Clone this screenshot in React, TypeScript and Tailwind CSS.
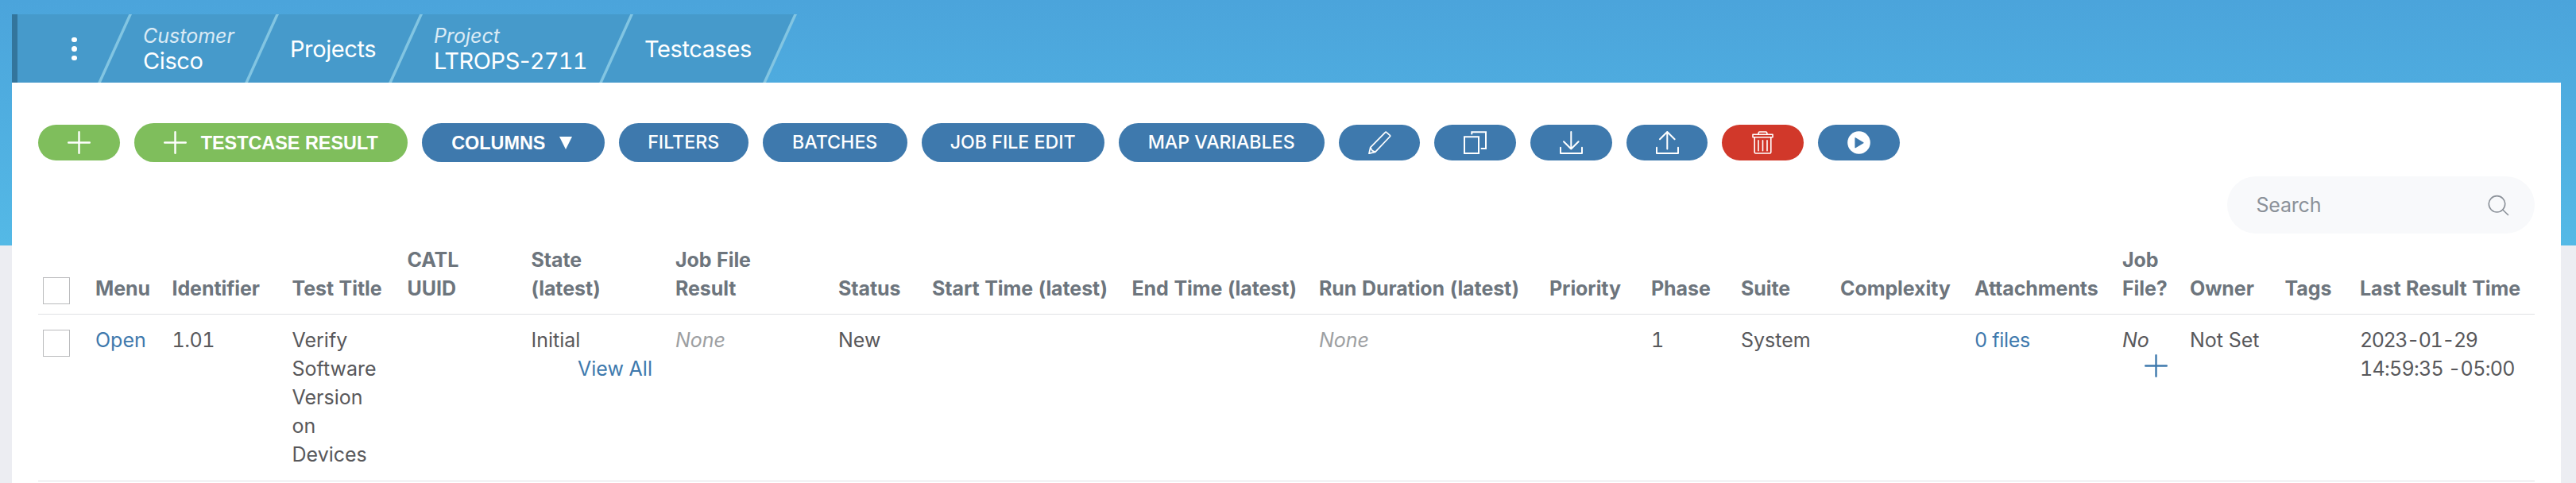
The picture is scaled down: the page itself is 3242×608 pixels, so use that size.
import {ReactNode} from "react";
import clsx from "clsx";

interface IColumn {
    title: ReactNode;
    width: string;
    value?: ReactNode;
}

interface ICrumb {
    label?: string;
    name: ReactNode;
    width: string;
}

interface IIcon {
    width?: number;
    children: ReactNode;
}

const Icon = ({width = 29, children}: IIcon) => (
    <svg width={width} height={29} viewBox={`0 0 ${width} 29`} fill="none" stroke="currentColor" strokeWidth={2}
         strokeLinecap="round" strokeLinejoin="round" className="shrink-0">
        {children}
    </svg>
);

const PlusIcon = () => (
    <Icon><path strokeWidth={2.4} d="M14.5 1.2v26.6M1.2 14.5h26.6"/></Icon>
);

// every crumb ends with a slanted divider, the last one cuts the bar off
const Slash = ({last = false}: { last?: boolean }) => (
    <svg width={43} height={86} viewBox="0 0 43 86" className="shrink-0">
        <path d={last ? "M0 0H41L2 86H0z" : "M0 0H43V86H0z"} fill="#469acb"/>
        <path d="M39.2 0H43L4 86H0.2z" fill="#82c5e2"/>
    </svg>
);

const crumbs: ICrumb[] = [
    {label: "Customer", name: "Cisco", width: "w-[142px]"},
    {name: "Projects", width: "w-[138px]"},
    {label: "Project", name: <>LTROPS-<span className="tabular-nums tracking-[-0.8px]">2711</span></>, width: "w-[222px]"},
    {name: "Testcases", width: "w-[163px]"},
];

const Breadcrumbs = () => (
    <nav className="flex h-[86px] text-white">
        <div className="w-[7px] bg-[#33759c]"/>
        <div className="flex w-[101px] flex-col items-center justify-center gap-[5px] bg-[#469acb] pl-[42px] pt-px">
            <span className="size-[6.5px] rounded-full bg-white"/>
            <span className="size-[6.5px] rounded-full bg-white"/>
            <span className="size-[6.5px] rounded-full bg-white"/>
        </div>
        <Slash/>
        {crumbs.map((crumb, index) => (
            <div key={index} className="flex">
                <div className={clsx("flex flex-col justify-center whitespace-nowrap bg-[#469acb] pl-[14px] pt-[2px]", crumb.width)}>
                    {crumb.label && <span className="text-[25px] italic leading-[30px] text-white/80">{crumb.label}</span>}
                    <span className="text-[29px] leading-[34px] tracking-[-0.4px]">{crumb.name}</span>
                </div>
                <Slash last={index === crumbs.length - 1}/>
            </div>
        ))}
    </nav>
);

const iconButton = "flex h-[45px] w-[102.7px] shrink-0 items-center justify-center rounded-full";
const textButton = "flex h-[49px] shrink-0 items-center rounded-full";
const boldLabel = "font-['Liberation_Sans',sans-serif] text-[23.4px] font-bold leading-6";

const textButtons = [
    {label: "FILTERS", width: "w-[163px]"},
    {label: "BATCHES", width: "w-[182px]"},
    {label: "JOB FILE EDIT", width: "w-[230px]"},
    {label: "MAP VARIABLES", width: "w-[259px]"},
];

const Toolbar = () => (
    <div className="flex h-[49px] items-center gap-[18px] whitespace-nowrap text-white">
        <button className={clsx(iconButton, "bg-[#7fbe5c]")}><PlusIcon/></button>
        <button className={clsx(textButton, "w-[344px] gap-[18px] bg-[#7fbe5c] pl-[37px]")}>
            <PlusIcon/>
            <span className={boldLabel}>TESTCASE RESULT</span>
        </button>
        <button className={clsx(textButton, "w-[230px] gap-[18px] bg-[#3e79ad] pl-[37.5px]")}>
            <span className={boldLabel}>COLUMNS</span>
            <svg width={16} height={16} viewBox="0 0 16 16" className="fill-white"><path d="M0 0h16L8 16z"/></svg>
        </button>
        {textButtons.map((button) => (
            <button key={button.label}
                    className={clsx(textButton, "justify-center bg-[#3e79ad] pb-[2px] text-[23.2px] font-medium leading-6", button.width)}>
                {button.label}
            </button>
        ))}
        <button className={clsx(iconButton, "bg-[#3e79ad]")}>
            <Icon><path strokeWidth={1.7} d="M1 28.2L2.7 20.6 21.4 1.6Q22.2 .8 23 1.6L27.3 5.4Q28 6.2 27.2 7L8.8 26.3zM2.7 20.6L5 24.6 8.8 26.3"/></Icon>
        </button>
        <button className={clsx(iconButton, "bg-[#3e79ad]")}>
            <Icon><path strokeLinejoin="miter" d="M1 7.3h18v20.6H1zM10.3 3.6V1.2H28V22h-5.5"/></Icon>
        </button>
        <button className={clsx(iconButton, "bg-[#3e79ad]")}>
            <Icon><path d="M14.3 1v21.5M5 13.2l9.3 9.3 9.3-9.3M1 20.7V28h27v-7.3"/></Icon>
        </button>
        <button className={clsx(iconButton, "bg-[#3e79ad]")}>
            <Icon><path d="M14.3 22.5V1M5 10.3L14.3 1l9.3 9.3M1 20.7V28h27v-7.3"/></Icon>
        </button>
        <button className={clsx(iconButton, "bg-[#d1382a]")}>
            <Icon width={27}>
                <path strokeWidth={1.6} d="M1 4.3h25v3.4H1zM8 4.3Q8 1 9.5 1h8Q19 1 19 4.3M3.2 7.7V26.5Q3.2 28 4.7 28H22.3Q23.8 28 23.8 26.5V7.7M8 11.7v13M13.5 11.7v13M19 11.7v13"/>
            </Icon>
        </button>
        <button className={clsx(iconButton, "bg-[#3e79ad]")}>
            <Icon>
                <circle cx={14.5} cy={14.5} r={14.3} fill="white" stroke="none"/>
                <path d="M10 8.7v12l10-6z" fill="#3e79ad" stroke="#3e79ad" strokeWidth={1.2}/>
            </Icon>
        </button>
    </div>
);

const None = () => <span className="italic text-[#9d9fa2]">None</span>;

const columns: IColumn[] = [
    {title: "Menu", width: "w-[96.5px]", value: <a className="text-[#3e79ad]">Open</a>},
    {title: "Identifier", width: "w-[151px]", value: <span className="tracking-[-0.5px]">1.01</span>},
    {title: "Test Title", width: "w-[145px]", value: <>Verify<br/>Software<br/>Version<br/>on<br/>Devices</>},
    {title: <>CATL<br/>UUID</>, width: "w-[156px]"},
    {
        title: <>State<br/>(latest)</>, width: "w-[181.5px]",
        value: <>Initial<a className="block pl-[58.5px] text-[#3e79ad]">View All</a></>
    },
    {title: <>Job File<br/>Result</>, width: "w-[205px]", value: <None/>},
    {title: "Status", width: "w-[118px]", value: "New"},
    {title: "Start Time (latest)", width: "w-[251.5px]"},
    {title: "End Time (latest)", width: "w-[235.5px]"},
    {title: "Run Duration (latest)", width: "w-[290px]", value: <None/>},
    {title: "Priority", width: "w-[128px]"},
    {title: "Phase", width: "w-[113px]", value: "1"},
    {title: "Suite", width: "w-[125px]", value: "System"},
    {title: "Complexity", width: "w-[169px]"},
    {title: "Attachments", width: "w-[186px]", value: <a className="tracking-[-0.3px] text-[#3e79ad]">0 files</a>},
    {
        title: <>Job<br/>File?</>, width: "w-[85px]",
        value: <><i>No</i><a className="block pl-[28px] text-[#3e79ad]"><PlusIcon/></a></>
    },
    {title: "Owner", width: "w-[119.5px]", value: "Not Set"},
    {title: "Tags", width: "w-[94.5px]"},
    {
        title: "Last Result Time", width: "w-[220px]",
        value: <><span className="tracking-[-1.45px]">2023-01-29</span><br/><span className="tracking-[-0.7px]">14:59:35 -05:00</span></>
    },
];

const TestcasesTable = () => (
    <table className="w-[3142px] table-fixed border-separate border-spacing-0 text-left text-[25px] leading-9 tabular-nums">
        <thead>
            <tr className="align-bottom text-[#6d757d]">
                <th className="w-[72px] border-b border-[#dfe1e4] pb-3 pl-[6px]">
                    <div className="size-[34px] border border-[#babbbd] bg-white"/>
                </th>
                {columns.map((column, index) => (
                    <th key={index} className={clsx("whitespace-nowrap border-b border-[#dfe1e4] pb-[14px] pt-[15px] font-bold tracking-[-0.08px]", column.width)}>
                        {column.title}
                    </th>
                ))}
            </tr>
        </thead>
        <tbody>
            <tr className="align-top text-[#58585b]">
                <td className="border-b border-[#dfe1e4] pl-[6px] pt-[19px]">
                    <div className="size-[34px] border border-[#babbbd] bg-white"/>
                </td>
                {columns.map((column, index) => (
                    <td key={index} className="whitespace-nowrap border-b border-[#dfe1e4] pb-[15px] pt-[14px]">
                        {column.value}
                    </td>
                ))}
            </tr>
        </tbody>
    </table>
);

const App = () => {
    return (
        <div className="h-[608px] w-[3242px] overflow-hidden bg-[#ecedf2] bg-[linear-gradient(#4ba4db,#54b9e6)] bg-[length:100%_309px] bg-no-repeat pl-[15px] pr-[19px] pt-[18px] font-['Inter',sans-serif]">
            <Breadcrumbs/>
            <main className="h-[504px] bg-white px-[33px] pt-[51px]">
                <Toolbar/>
                <div className="mt-[18px] flex justify-end">
                    <label className="flex h-[72px] w-[387px] items-center justify-between rounded-full bg-[#f8f9fb] pl-[36.5px] pr-[32px] text-[25px] text-[#8b9199]">
                        <span className="pt-[2px] tracking-[-0.2px]">Search</span>
                        <svg width={27} height={27} viewBox="0 0 27 27" fill="none" stroke="currentColor" strokeWidth={1.6} strokeLinecap="round">
                            <circle cx={11.5} cy={11.8} r={10.2}/>
                            <path d="M18.8 19l6.7 6.5"/>
                        </svg>
                    </label>
                </div>
                <TestcasesTable/>
            </main>
        </div>
    );
};

export default App;
